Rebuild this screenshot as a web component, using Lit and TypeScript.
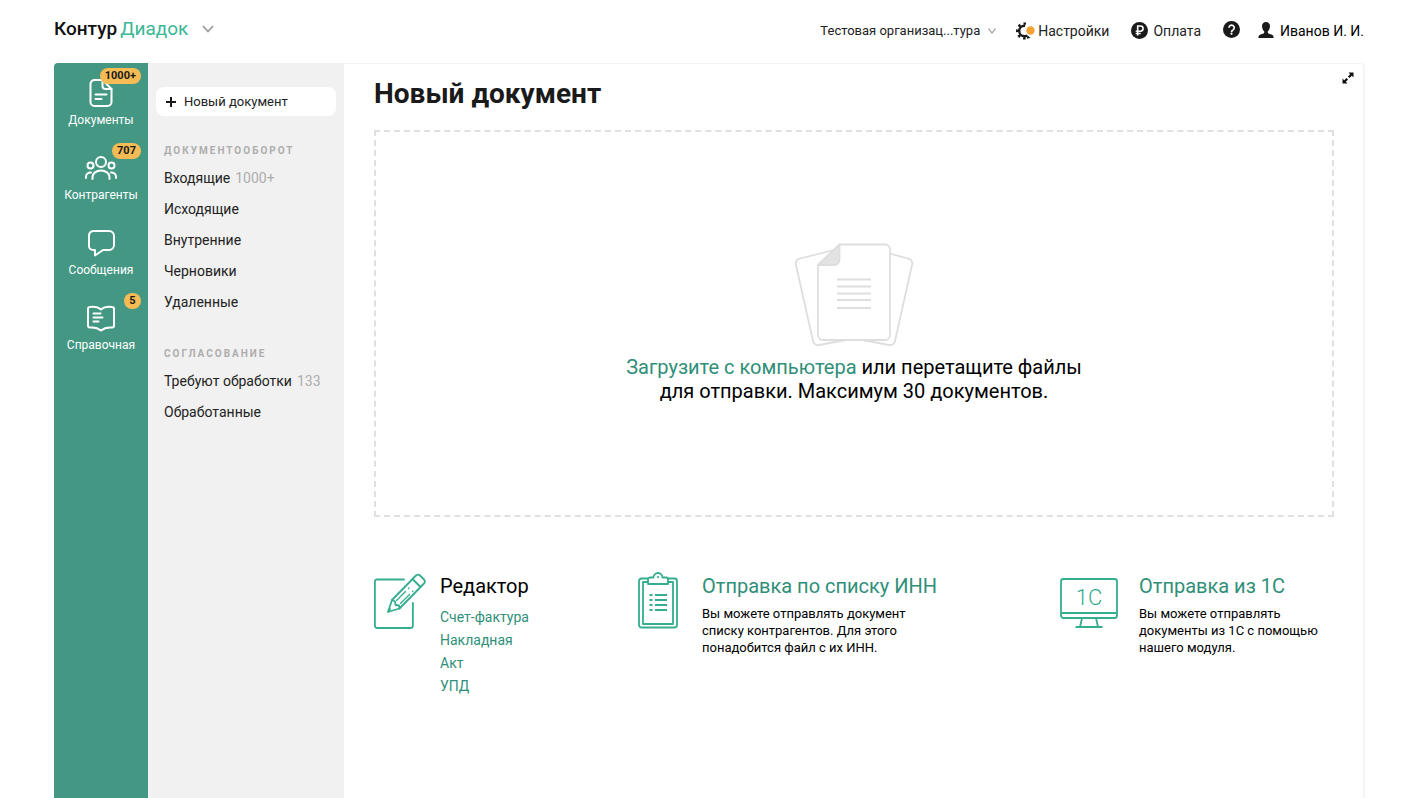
import { LitElement, html, css, svg, nothing } from "lit";
import { customElement } from "lit/decorators.js";

const docIcon = svg`<svg width="28" height="28" viewBox="0 0 28 28" fill="none" stroke="#fff" stroke-width="2" stroke-linejoin="round" stroke-linecap="round"><path d="M15.500 1H7.500a4 4 0 0 0-4 4v18a4 4 0 0 0 4 4h13a4 4 0 0 0 4-4V10z"/><path d="M15.500 1v6a3 3 0 0 0 3 3h6"/><path d="M8.500 15.500h11M8.500 20h6"/></svg>`;
const peopleIcon = svg`<svg width="32" height="28" viewBox="0 0 32 28" fill="none" stroke="#fff" stroke-width="2" stroke-linecap="round"><circle cx="16" cy="8" r="5"/><path d="M7.500 25v-2a8.500 6.500 0 0 1 17 0v2"/><circle cx="5.500" cy="11.500" r="3"/><circle cx="26.500" cy="11.500" r="3"/><path d="M1 24v-1.500a4.500 4 0 0 1 5-4M31 24v-1.500a4.500 4 0 0 0-5-4"/></svg>`;
const chatIcon = svg`<svg width="28" height="28" viewBox="0 0 28 28" fill="none" stroke="#fff" stroke-width="2" stroke-linejoin="round"><path d="M6 2h16a5 5 0 0 1 5 5v9a5 5 0 0 1-5 5h-6l-8 5.500V21H6a4 4 0 0 1-4-4V7a5 5 0 0 1 4-5z"/></svg>`;
const bookIcon = svg`<svg width="28" height="28" viewBox="0 0 28 28" fill="none" stroke="#fff" stroke-width="2" stroke-linejoin="round" stroke-linecap="round"><path d="M14 5.500C11 3 7 2.500 3 3a2 2 0 0 0-2 2v16.500a2 2 0 0 0 2 2c5-.5 8 .5 11 3 3-2.500 6-3.500 11-3a2 2 0 0 0 2-2V5a2 2 0 0 0-2-2c-4-.5-8 0-11 2.500z"/><path d="M6.500 9.500h7M6.500 13.500h9M6.500 17.500h5"/></svg>`;

const rail = [
  { label: "Документы", badge: "1000+", icon: docIcon },
  { label: "Контрагенты", badge: "707", icon: peopleIcon },
  { label: "Сообщения", badge: "", icon: chatIcon },
  { label: "Справочная", badge: "5", icon: bookIcon },
];

const sections = [
  {
    title: "Документооборот",
    items: [["Входящие", "1000+"], ["Исходящие"], ["Внутренние"], ["Черновики"], ["Удаленные"]],
  },
  { title: "Согласование", items: [["Требуют обработки", "133"], ["Обработанные"]] },
];

const shared = css`
  :host, * { box-sizing: border-box; }
  a { color: inherit; text-decoration: none; }
  button { font: inherit; color: inherit; background: none; border: 0; padding: 0; cursor: pointer; }
  h1, h2, h3, p, ul { margin: 0; padding: 0; }
  ul { list-style: none; }
  svg { display: block; flex: none; }
`;

@customElement("app-header")
class AppHeader extends LitElement {
  static styles = [shared, css`
    :host { display: flex; align-items: center; justify-content: space-between; height: 63px; padding: 0 54px 2px; font-size: 14px; line-height: 20px; color: #222; }
    .brand { display: flex; align-items: center; font-size: 19px; line-height: 24px; padding-bottom: 4px; }
    .logo { display: flex; gap: 3px; }
    .kontur { font-weight: 500; color: #111; }
    .diadoc { color: #3ab795; }
    .more { margin-left: 14px; }
    .tools { display: flex; align-items: center; }
    .tool { display: flex; align-items: center; }
    .org { gap: 8px; margin-right: 20px; font-size: 13px; }
    .settings { gap: 3px; margin-right: 22px; }
    .pay { gap: 5px; margin-right: 22px; }
    .help { margin-right: 18px; }
    .user { gap: 6px; color: #000; }
  `];
  render() {
    return html`
      <div class="brand">
        <a class="logo" href="#"><span class="kontur">Контур</span><span class="diadoc">Диадок</span></a>
        <button class="more" aria-label="Сервисы"><svg width="12" height="8" viewBox="0 0 12 8" fill="none" stroke="#999" stroke-width="1.600"><path d="M1 1l5 5.500L11 1"/></svg></button>
      </div>
      <nav class="tools">
        <button class="tool org">Тестовая организац...тура<svg width="8" height="6" viewBox="0 0 8 6" fill="none" stroke="#999" stroke-width="1.200"><path d="M.5.5L4 5 7.500.5"/></svg></button>
        <a class="tool settings" href="#"><svg width="19" height="18" viewBox="0 0 19 18"><circle cx="8.500" cy="9" r="5.300" fill="none" stroke="#1a1a1a" stroke-width="2.400"/><circle cx="8.500" cy="9" r="7.300" fill="none" stroke="#1a1a1a" stroke-width="2.600" stroke-dasharray="2.500 3.230" stroke-dashoffset="1.200"/><path d="M9.500 2.500L19 0v18l-7-4-4-5z" fill="#fff"/><path d="M11.500 14.500l1 2" stroke="#1a1a1a" stroke-width="2"/><circle cx="14.500" cy="8.500" r="4.200" fill="#f5a135"/></svg>Настройки</a>
        <a class="tool pay" href="#"><svg width="17" height="17" viewBox="0 0 17 17"><circle cx="8.500" cy="8.500" r="8.500" fill="#1a1a1a"/><path d="M6.700 13.500V4h2.800a2.600 2.600 0 0 1 0 5.200H4.700M4.700 11.500h5" fill="none" stroke="#fff" stroke-width="1.600"/></svg>Оплата</a>
        <a class="tool help" href="#" aria-label="Помощь"><svg width="17" height="19" viewBox="0 0 17 19"><circle cx="8.500" cy="8.500" r="8.500" fill="#1a1a1a"/><path d="M6 6.700a2.600 2.600 0 1 1 4 2.200c-1 .6-1.500 1-1.500 2" fill="none" stroke="#fff" stroke-width="1.700"/><circle cx="8.500" cy="12.700" r="1.100" fill="#fff"/></svg></a>
        <a class="tool user" href="#"><svg width="16" height="18" viewBox="0 0 16 18" fill="#1a1a1a"><path d="M8 0C5.500 0 4 1.700 4 4c0 2.200.8 4.300 2.300 5.500 0 1.500-.3 2-2 2.500C1.500 12.800.3 13.500.3 16h15.400c0-2.500-1.200-3.200-4-4-1.700-.5-2-1-2-2.500C11.200 8.300 12 6.200 12 4c0-2.300-1.500-4-4-4z"/></svg>Иванов И. И.</a>
      </nav>`;
  }
}

@customElement("app-rail")
class AppRail extends LitElement {
  static styles = [shared, css`
    :host { display: block; flex: none; width: 94px; padding-top: 5px; background: #449783; color: #fff; border-top-left-radius: 4px; }
    .item { position: relative; display: flex; flex-direction: column; align-items: center; height: 75px; padding-top: 11px; gap: 5px; font-size: 12px; line-height: 16px; }
    .badge { position: absolute; top: 0; right: 7px; min-width: 17px; padding: 0 5px; border-radius: 8px; background: #f5bb55; color: #1a1a1a; font-size: 11px; line-height: 16px; font-weight: 700; text-align: center; }
  `];
  render() {
    return html`<nav>${rail.map((r) => html`
      <a class="item" href="#">${r.icon}<span>${r.label}</span>${r.badge ? html`<span class="badge">${r.badge}</span>` : nothing}</a>`)}</nav>`;
  }
}

@customElement("app-sidebar")
class AppSidebar extends LitElement {
  static styles = [shared, css`
    :host { display: block; flex: none; width: 196px; padding: 24px 8px; background: #f1f1f1; color: #222; font-size: 14px; }
    .create { display: flex; align-items: center; gap: 7px; width: 100%; height: 29px; padding: 0 9px; border-radius: 8px; background: #fff; font-size: 13px; }
    .section { padding: 27px 8px 0; }
    .section + .section { padding-top: 28px; }
    .title { font-size: 10px; line-height: 16px; font-weight: 700; letter-spacing: 2px; text-transform: uppercase; color: #adadad; padding-bottom: 4px; }
    .link { display: flex; gap: 5px; line-height: 31px; }
    .count { color: #adadad; }
  `];
  render() {
    return html`
      <button class="create"><svg width="12" height="12" viewBox="0 0 12 12" stroke="#1a1a1a" stroke-width="2"><path d="M6 1v10M1 6h10"/></svg>Новый документ</button>
      ${sections.map((s) => html`<section class="section">
        <h3 class="title">${s.title}</h3>
        <ul>${s.items.map(([name, count]) => html`<li><a class="link" href="#"><span>${name}</span>${count ? html`<span class="count">${count}</span>` : nothing}</a></li>`)}</ul>
      </section>`)}`;
  }
}

@customElement("app-main")
class AppMain extends LitElement {
  static styles = [shared, css`
    :host { position: relative; display: block; padding: 14px 29px 40px 30px; border: 1px solid #f3f3f3; border-width: 1px 1px 0 0; border-top-right-radius: 4px; color: #000; box-shadow: 1px 0 1px #f6f6f6; }
    .title { font-size: 28px; line-height: 32px; font-weight: 700; color: #1a1a1a; }
    .expand { position: absolute; top: 7px; right: 8px; }
    .drop { display: flex; flex-direction: column; align-items: center; margin-top: 20px; height: 387px; padding-top: 111px; border: 2px dashed #e0e0e0; text-align: center; font-size: 20px; line-height: 24px; }
    .hint { margin-top: 8px; max-width: 480px; }
    .accent { color: #2f8f78; }
    .ways { display: grid; grid-template-columns: 264fr 422fr 274fr; margin-top: 55px; }
    .way { display: flex; align-items: flex-start; }
    .icon { flex: none; width: 66px; }
    .list-icon { width: 64px; }
    .pc-icon { width: 79px; }
    .name { font-size: 20px; line-height: 28px; font-weight: 400; }
    .text { max-width: 230px; margin-top: 5px; font-size: 13px; line-height: 17px; }
    .links { margin-top: 6px; font-size: 14px; line-height: 23px; }
    .mark { font-size: 22px; font-weight: 300; fill: #35ad8f; stroke: none; }
  `];
  render() {
    return html`
      <h1 class="title">Новый документ</h1>
      <button class="expand" aria-label="Развернуть"><svg width="14" height="14" viewBox="0 0 14 14" fill="#111"><path d="M7.500 1.500h5v5l-1.700-1.700-2.300 2.300-1.600-1.600 2.300-2.300zM6.500 12.500h-5v-5l1.700 1.700 2.300-2.300 1.600 1.600-2.300 2.300z"/></svg></button>
      <section class="drop">
        <svg width="120" height="104" viewBox="0 0 120 104" fill="#fff" stroke="#dedede" stroke-width="1.800" stroke-linejoin="round">
          <path d="M40 7L6 15.500a5 5 0 0 0-4 6.500l17 76a5 5 0 0 0 6 4l32-6M90 9l24 6.500a5 5 0 0 1 4 6.500l-17 76a5 5 0 0 1-6 4L63 96"/>
          <path d="M45.500 1.500H91a5 5 0 0 1 5 5V92a5 5 0 0 1-5 5H29a5 5 0 0 1-5-5V22z"/>
          <path d="M45.500 1.500V17a5 5 0 0 1-5 5H24z" fill="#e3e3e3"/>
          <path d="M43 36.500h34M43 43.500h34M43 50.500h34M43 57h34M43 65h34"/>
        </svg>
        <p class="hint"><a class="accent" href="#">Загрузите с компьютера</a> или перетащите файлы для отправки. Максимум 30 документов.</p>
      </section>
      <div class="ways">
        <section class="way">
          <div class="icon"><svg width="54" height="58" viewBox="0 0 54 58" fill="none" stroke="#35ad8f" stroke-width="1.800" stroke-linejoin="round" stroke-linecap="round">
            <path d="M30 7.500H2.500A2 2 0 0 0 .9 9.500v44a2.500 2.500 0 0 0 2.500 2.500h33a2.500 2.500 0 0 0 2.500-2.500V31"/>
            <path d="M14 40l4-12 24-24.500a3 3 0 0 1 4 0l4 4a3 3 0 0 1 0 4L25.500 36.500z"/><path d="M18 28l3 1.500.5 3.500 3.500.5.500 3M38.500 7l8 8" /><path d="M14.500 39l2-2M22.500 28.500l9-9M26.500 31.500l9-9M34.500 16.500l.5-.5M38.500 19.500l.5-.5" stroke-width="1.300"/></svg></div>
          <div>
            <h2 class="name">Редактор</h2>
            <ul class="links accent">${["Счет-фактура", "Накладная", "Акт", "УПД"].map((t) => html`<li><a href="#">${t}</a></li>`)}</ul>
          </div>
        </section>
        <section class="way">
          <div class="icon list-icon"><svg width="40" height="58" viewBox="0 0 40 58" fill="none" stroke="#35ad8f" stroke-width="1.800" stroke-linejoin="round">
            <path d="M10 6.500H3.500A2.500 2.500 0 0 0 1 9v44a2.500 2.500 0 0 0 2.500 2.500h33A2.500 2.500 0 0 0 39 53V9a2.500 2.500 0 0 0-2.500-2.500H30"/>
            <path d="M10 10H5v42h30V10h-5"/><path d="M10 7.500a2 2 0 0 1 2-2h3.500a4.500 4.500 0 0 1 9 0H28a2 2 0 0 1 2 2V12H10z"/><circle cx="20" cy="5" r=".5" stroke-width="1.200"/>
            <path d="M11.500 23h3M17 23h12M11.500 28h3M17 28h12M11.500 33h3M17 33h12M11.500 38h3M17 38h12"/></svg></div>
          <div>
            <h2 class="name accent"><a href="#">Отправка по списку ИНН</a></h2>
            <p class="text">Вы можете отправлять документ списку контрагентов. Для этого понадобится файл с их ИНН.</p>
          </div>
        </section>
        <section class="way">
          <div class="icon pc-icon"><svg width="58" height="58" viewBox="0 0 58 58" fill="none" stroke="#35ad8f" stroke-width="1.800">
            <rect x="1" y="7" width="56" height="39" rx="2.500"/><path d="M1 41h56M22 46l-2 9M36 46l2 9M15.500 55h27"/><text class="mark" x="29" y="33" text-anchor="middle">1С</text></svg></div>
          <div>
            <h2 class="name accent"><a href="#">Отправка из 1С</a></h2>
            <p class="text">Вы можете отправлять документы из 1С с помощью нашего модуля.</p>
          </div>
        </section>
      </div>`;
  }
}

@customElement("app-root")
class AppRoot extends LitElement {
  static styles = css`
    :host { display: flex; flex-direction: column; min-height: 100vh; background: #fff; font-family: Roboto, "Noto Sans", sans-serif; }
    .panel { flex: 1; display: flex; margin: 0 54px; }
    .main { flex: 1; min-width: 0; }
  `;
  render() {
    return html`<app-header></app-header>
      <div class="panel"><app-rail></app-rail><app-sidebar></app-sidebar><app-main class="main"></app-main></div>`;
  }
}
